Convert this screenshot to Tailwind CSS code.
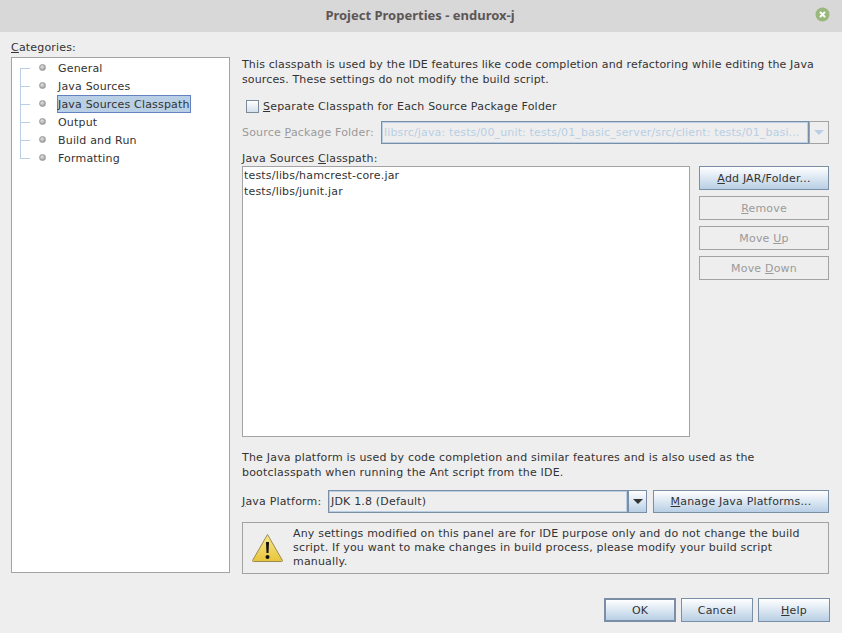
<!DOCTYPE html>
<html lang="en">
<head>
    <meta charset="UTF-8">
    <title>Project Properties - endurox-j</title>
    <script src="https://cdn.jsdelivr.net/npm/@tailwindcss/browser@4"></script>
</head>
<body class="bg-[#eeeeee] w-[842px] h-[633px] overflow-hidden font-['DejaVu_Sans',sans-serif] text-[11px] leading-[15px] tracking-[0.18px] text-[#333333]">
    <!-- title bar -->
    <div class="h-8 bg-[#d8d8d8] flex items-center justify-center relative pb-[2px]">
        <span class="font-['Noto_Sans',sans-serif] font-bold text-[#5c5656] text-[13px] tracking-normal pr-[2px]">Project Properties - endurox-j</span>
        <svg class="absolute left-[815px] top-[7px] w-[15px] h-[15px]" viewBox="0 0 15 15">
            <circle cx="7.5" cy="7.5" r="7" fill="#9ab87c"></circle>
            <path d="M5.5 5.5l4 4M9.5 5.5l-4 4" stroke="#ffffff" stroke-width="2" stroke-linecap="round"></path>
        </svg>
    </div>

    <div class="flex px-[11px] h-[601px]">
        <!-- categories -->
        <div class="w-[219px] shrink-0 flex flex-col">
            <div class="pt-[8px] h-[25px]"><span class="underline">C</span>ategories:</div>
            <div class="h-[516px] shrink-0 bg-white border border-[#a3a3a3] pt-[1px] relative">
                <div class="absolute left-[8px] top-[10px] w-px h-[91px] bg-[#b8cfe5]"></div>
                <div class="flex items-center h-[18px]">
                    <div class="w-[10px] h-px bg-[#b8cfe5] ml-[8px] mr-[9px]"></div>
                    <div class="w-[7px] h-[7px] rounded-full bg-[radial-gradient(circle_at_40%_35%,#e4e4e4,#8c8c8c)] border border-[#999999] mr-[11px] mb-[1px]"></div>
                    <span class="px-[1px]">General</span>
                </div>
                <div class="flex items-center h-[18px]">
                    <div class="w-[10px] h-px bg-[#b8cfe5] ml-[8px] mr-[9px]"></div>
                    <div class="w-[7px] h-[7px] rounded-full bg-[radial-gradient(circle_at_40%_35%,#e4e4e4,#8c8c8c)] border border-[#999999] mr-[11px] mb-[1px]"></div>
                    <span class="px-[1px]">Java Sources</span>
                </div>
                <div class="flex items-center h-[18px]">
                    <div class="w-[10px] h-px bg-[#b8cfe5] ml-[8px] mr-[9px]"></div>
                    <div class="w-[7px] h-[7px] rounded-full bg-[radial-gradient(circle_at_40%_35%,#e4e4e4,#8c8c8c)] border border-[#999999] mr-[11px] mb-[1px]"></div>
                    <span class="h-[18px] flex items-center bg-[#b8cfe5] border border-[#6382bf] whitespace-nowrap">Java Sources Classpath</span>
                </div>
                <div class="flex items-center h-[18px]">
                    <div class="w-[10px] h-px bg-[#b8cfe5] ml-[8px] mr-[9px]"></div>
                    <div class="w-[7px] h-[7px] rounded-full bg-[radial-gradient(circle_at_40%_35%,#e4e4e4,#8c8c8c)] border border-[#999999] mr-[11px] mb-[1px]"></div>
                    <span class="px-[1px]">Output</span>
                </div>
                <div class="flex items-center h-[18px]">
                    <div class="w-[10px] h-px bg-[#b8cfe5] ml-[8px] mr-[9px]"></div>
                    <div class="w-[7px] h-[7px] rounded-full bg-[radial-gradient(circle_at_40%_35%,#e4e4e4,#8c8c8c)] border border-[#999999] mr-[11px] mb-[1px]"></div>
                    <span class="px-[1px]">Build and Run</span>
                </div>
                <div class="flex items-center h-[18px]">
                    <div class="w-[10px] h-px bg-[#b8cfe5] ml-[8px] mr-[9px]"></div>
                    <div class="w-[7px] h-[7px] rounded-full bg-[radial-gradient(circle_at_40%_35%,#e4e4e4,#8c8c8c)] border border-[#999999] mr-[11px] mb-[1px]"></div>
                    <span class="px-[1px]">Formatting</span>
                </div>
            </div>
        </div>

        <!-- right panel -->
        <div class="ml-[12px] w-[588px] flex flex-col">
            <div class="pt-[25px] h-[55px] shrink-0 whitespace-nowrap tracking-[0.14px]">This classpath is used by the IDE features like code completion and refactoring while editing the Java<br>sources. These settings do not modify the build script.</div>
            <div class="flex items-center h-[24px] shrink-0 ml-[4px] mt-[7px]">
                <div class="w-[13px] h-[13px] border border-[#7a8a99] bg-gradient-to-b from-[#ffffff] to-[#d5e0ec] mr-[4px]"></div>
                <span class="tracking-[0.2px]"><span class="underline">S</span>eparate Classpath for Each Source Package Folder</span>
            </div>
            <div class="flex items-center h-[23px] shrink-0 mt-[3px]">
                <span class="text-[#9a9a9a] w-[139px] shrink-0 whitespace-nowrap">Source <span class="underline">P</span>ackage Folder:</span>
                <div class="w-[428px] h-[23px] border border-[#7a8fa6] shadow-[inset_0_0_0_1px_#b8cfe5] bg-[#eeeeee] text-[#b8cfe5] pl-[2px] flex items-center whitespace-nowrap overflow-hidden tracking-[0.14px]">libsrc/java: tests/00_unit: tests/01_basic_server/src/client: tests/01_basi...</div>
                <div class="w-[20px] h-[23px] border border-[#a3a3a3] flex items-center justify-center">
                    <div class="w-0 h-0 border-x-[5px] border-x-transparent border-t-[5px] border-t-[#b8cfe5]"></div>
                </div>
            </div>
            <div class="mt-[7px] h-[15px] shrink-0"><span>Java Sources <span class="underline">C</span>lasspath:</span></div>
            <div class="flex shrink-0">
                <div class="w-[448px] h-[271px] bg-white border border-[#a3a3a3] pl-[1px] pt-[1px]">
                    <div class="h-[16px]">tests/libs/hamcrest-core.jar</div>
                    <div class="h-[16px]">tests/libs/junit.jar</div>
                </div>
                <div class="ml-[9px] w-[130px] flex flex-col gap-[6px]">
                    <div class="h-[24px] border border-[#7a8fa6] bg-gradient-to-b from-[#ffffff] to-[#b8cfe5] flex items-center justify-center"><span><span class="underline">A</span>dd JAR/Folder...</span></div>
                    <div class="h-[24px] border border-[#a3a3a3] text-[#9a9a9a] flex items-center justify-center"><span><span class="underline">R</span>emove</span></div>
                    <div class="h-[24px] border border-[#a3a3a3] text-[#9a9a9a] flex items-center justify-center"><span>Move <span class="underline">U</span>p</span></div>
                    <div class="h-[24px] border border-[#a3a3a3] text-[#9a9a9a] flex items-center justify-center"><span>Move <span class="underline">D</span>own</span></div>
                </div>
            </div>
            <div class="mt-[13px] h-[30px] shrink-0 whitespace-nowrap tracking-[0.2px]">The Java platform is used by code completion and similar features and is also used as the<br>bootclasspath when running the Ant script from the IDE.</div>
            <div class="flex items-center h-[23px] shrink-0 mt-[10px]">
                <span class="w-[86px] shrink-0"><span class="underline">J</span>ava Platform:</span>
                <div class="w-[300px] h-[23px] border border-[#7a8fa6] shadow-[inset_0_0_0_1px_#b8cfe5] pl-[2px] flex items-center">JDK 1.8 (Default)</div>
                <div class="w-[19px] h-[23px] border border-[#7a8fa6] bg-gradient-to-b from-[#ffffff] to-[#b8cfe5] flex items-center justify-center">
                    <div class="w-0 h-0 border-x-[5px] border-x-transparent border-t-[5px] border-t-[#333333]"></div>
                </div>
                <div class="ml-[6px] w-[176px] h-[23px] border border-[#7a8fa6] bg-gradient-to-b from-[#ffffff] to-[#b8cfe5] flex items-center justify-center"><span><span class="underline">M</span>anage Java Platforms...</span></div>
            </div>
            <div class="mt-[9px] w-[587px] h-[52px] shrink-0 border border-[#a3a3a3] flex items-center">
                <svg class="ml-[8px] w-[33px] h-[30px] shrink-0" viewBox="0 0 33 30">
                    <defs>
                        <linearGradient id="warn" x1="0" y1="0" x2="0" y2="1">
                            <stop offset="0" stop-color="#f8e88a"></stop>
                            <stop offset="1" stop-color="#e8c43c"></stop>
                        </linearGradient>
                    </defs>
                    <path d="M16.5 1.5L31.5 27.5a1 1 0 0 1-1 1H2.5a1 1 0 0 1-1-1Z" fill="url(#warn)" stroke="#9a8a50" stroke-linejoin="round"></path>
                    <path d="M15 9h3l-.5 11h-2Z" fill="#111111"></path>
                    <circle cx="16.5" cy="24" r="2" fill="#111111"></circle>
                </svg>
                <div class="ml-[9px] leading-[14px] whitespace-nowrap">Any settings modified on this panel are for IDE purpose only and do not change the build<br>script. If you want to make changes in build process, please modify your build script<br>manually.</div>
            </div>
            <!-- dialog buttons -->
            <div class="flex justify-end mt-[24px] w-[588px] gap-[5px] shrink-0">
                <div class="w-[72px] h-[24px] border-2 border-[#7a8fa6] bg-gradient-to-b from-[#ffffff] to-[#b8cfe5] flex items-center justify-center">OK</div>
                <div class="w-[72px] h-[24px] border border-[#7a8fa6] bg-gradient-to-b from-[#ffffff] to-[#b8cfe5] flex items-center justify-center">Cancel</div>
                <div class="w-[72px] h-[24px] border border-[#7a8fa6] bg-gradient-to-b from-[#ffffff] to-[#b8cfe5] flex items-center justify-center"><span><span class="underline">H</span>elp</span></div>
            </div>
        </div>
    </div>
</body>
</html>
